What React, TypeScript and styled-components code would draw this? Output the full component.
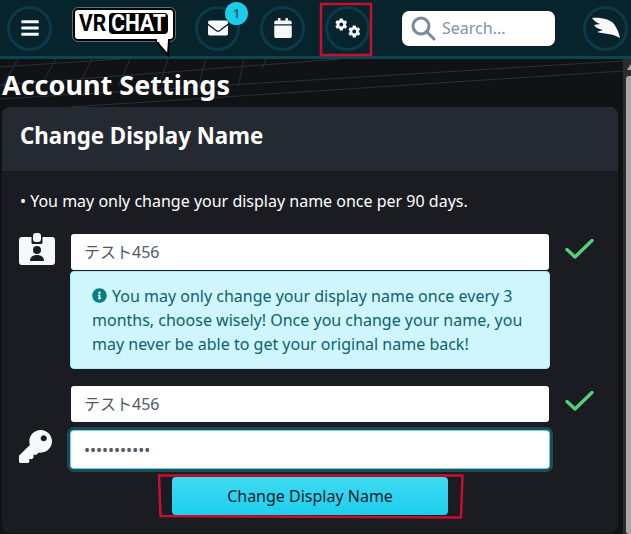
import React from "react";
import styled, { createGlobalStyle } from "styled-components";
import { FaBars, FaEnvelope, FaCalendar, FaCog, FaKey, FaInfoCircle } from "react-icons/fa";

const Global = createGlobalStyle`
  html, body { margin: 0; padding: 0; background: #101216; }
  body { font-family: "Noto Sans", "Noto Sans CJK JP", sans-serif; overflow: hidden; }
  * { box-sizing: border-box; }
`;

const Page = styled.div`
  position: relative;
  width: 631px;
  height: 534px;
  overflow: hidden;
  display: flex;
  flex-direction: column;
`;

const Header = styled.header`
  flex: none;
  height: 59px;
  background: #07232c;
  border-bottom: 3px solid #0e4552;
  display: flex;
  align-items: center;
  padding: 0 0 0 7px;
`;

const Circle = styled.div<{ $ml?: number }>`
  position: relative;
  flex: none;
  width: 45px;
  height: 45px;
  margin-left: ${(p) => p.$ml ?? 0}px;
  border-radius: 50%;
  border: 3px solid #0c3a48;
  display: flex;
  align-items: center;
  justify-content: center;
  color: #f7f8fa;
  font-size: 20px;
`;

const Badge = styled.span`
  position: absolute;
  top: -7px;
  right: -11px;
  width: 23px;
  height: 23px;
  border-radius: 50%;
  background: #1ccdeb;
  color: #2f6472;
  font-size: 12px;
  font-weight: 700;
  display: flex;
  align-items: center;
  justify-content: center;
`;

const Gears = styled.div`
  width: 25px;
  height: 20px;
  display: flex;
  justify-content: space-between;
  font-size: 13px;
  svg:first-child { align-self: flex-start; }
  svg:last-child { align-self: flex-end; }
`;

const Logo = styled.div`
  position: relative;
  flex: none;
  width: 102px;
  height: 33px;
  margin: -8px 0 0 21px;
  background: #fff;
  border: 2px solid #000;
  border-radius: 5px;
  outline: 1px solid rgba(255, 255, 255, 0.35);
  display: flex;
  align-items: stretch;
  padding: 3px 5px 5px 4px;
  font-family: "Roboto", "Liberation Sans", sans-serif;
  font-weight: 700;
  font-size: 21px;
  line-height: 21px;
`;

const LogoVR = styled.span`
  flex: none;
  color: #000;
  width: 30px;
  display: inline-block;
  transform: scale(1, 1.16);
  transform-origin: left center;
  white-space: nowrap;
`;

const LogoChat = styled.span`
  flex: 1;
  min-width: 0;
  background: #000;
  color: #fff;
  border-radius: 4px;
  display: flex;
  justify-content: center;
`;

const LogoChatText = styled.span`
  display: inline-block;
  flex: none;
  transform: scale(1, 1.16);
  white-space: nowrap;
`;

const LogoTail = styled.svg`
  position: absolute;
  right: 2px;
  top: 27px;
`;

const SearchBox = styled.div`
  flex: none;
  width: 153px;
  height: 35px;
  margin-left: 32px;
  background: #fff;
  border-radius: 7px;
  display: flex;
  align-items: center;
  padding-left: 9px;
  gap: 6px;
  color: #8192a3;
  font-size: 16px;
`;

const Body = styled.div`
  position: relative;
  flex: 1;
  display: flex;
  min-height: 0;
`;

const Lines = styled.svg`
  position: absolute;
  left: 0;
  top: 0;
`;

const Main = styled.main`
  position: relative;
  flex: 1;
  padding: 0 5px 0 2px;
`;

const Title = styled.h1`
  margin: 0;
  height: 48px;
  padding: 7px 0 0;
  font-size: 27px;
  line-height: 37px;
  font-weight: 700;
  color: #fff;
`;

const Card = styled.section`
  height: 426px;
  border-radius: 8px;
  background: #1a1c21;
  overflow: hidden;
`;

const CardHead = styled.div`
  height: 64px;
  background: #252932;
  padding: 0 18px;
  display: flex;
  align-items: center;
`;

const CardTitle = styled.h2`
  margin: -8px 0 0;
  font-size: 22.3px;
  font-weight: 700;
  color: #fff;
`;

const CardBody = styled.div`
  padding: 19px 0 0;
`;

const Notice = styled.p`
  margin: 0 0 22px 18px;
  font-size: 16px;
  line-height: 22px;
  color: #fff;
`;

const Row = styled.div`
  display: grid;
  grid-template-columns: 69px 478px 1fr;
`;

const IconCell = styled.div`
  color: #f7f8fa;
  padding-left: 17px;
  display: flex;
  align-items: center;
  font-size: 33px;
`;

const BadgeCell = styled(IconCell)`
  align-items: flex-start;
  margin-top: -1px;
`;

const CheckCell = styled.div`
  padding: 3px 0 0 15px;
`;

const Input = styled.div`
  height: 36px;
  background: #fff;
  border-radius: 3px;
  padding: 0 13px 2px;
  display: flex;
  align-items: center;
  color: #4f5a66;
  font-size: 16px;
`;

const Alert = styled.div`
  width: 480px;
  margin: 1px 0 17px -1px;
  height: 98px;
  background: #cff6fd;
  border: 1px solid #a8ecf8;
  border-radius: 4px;
  padding: 12px 21px 0;
  color: #0c6270;
  font-size: 16px;
  line-height: 24px;
`;

const InfoIcon = styled.span`
  color: #0a7d80;
  font-size: 15px;
  margin-right: 5px;
  vertical-align: -1px;
  display: inline-block;
  line-height: 1;
`;

const PasswordInput = styled.div`
  width: 482px;
  height: 41px;
  margin: 7px 0 0 -2px;
  background: #fff;
  border: 2px solid #6bd0e0;
  outline: 3px solid #1d4c59;
  outline-offset: -1px;
  border-radius: 5px;
  padding: 0 13px;
  display: flex;
  align-items: center;
  color: #4f5a66;
  font-size: 16px;
`;

const ButtonRow = styled.div`
  display: flex;
  justify-content: center;
  margin-top: 7px;
`;

const Button = styled.button`
  width: 276px;
  height: 38px;
  border: none;
  border-radius: 4px;
  background: linear-gradient(180deg, #3fd9f1, #1dcfee);
  color: #0c1c28;
  font-family: inherit;
  font-size: 16px;
`;

const ScrollTrack = styled.div`
  position: relative;
  flex: none;
  width: 8px;
  background: #2c2c2c;
  padding: 17px 0 0 3px;
`;

const ScrollThumb = styled.div`
  width: 5px;
  height: 458px;
  background: #a8a8a8;
  border-radius: 3px 0 0 3px;
`;

const ScrollArrow = styled.div`
  position: absolute;
  right: 0;
  top: 5px;
  width: 0;
  height: 0;
  border-left: 4px solid transparent;
  border-bottom: 6px solid #a8a8a8;
`;

const Annotations = styled.svg`
  position: absolute;
  left: 0;
  top: 0;
  pointer-events: none;
`;

const Check = () => (
  <svg width="32" height="24" viewBox="0 0 32 24" fill="none">
    <path d="M3 12.5 L11 20 L28 3.5" stroke="#56d078" strokeWidth="3.4" strokeLinecap="round" strokeLinejoin="round" />
  </svg>
);

const IdBadge = () => (
  <svg width="36" height="33" viewBox="0 0 36 33" fill="#f7f8fa">
    <rect x="0" y="4" width="36" height="28" rx="3" />
    <rect x="12.5" y="3" width="11" height="8" rx="1.5" fill="#1a1c21" />
    <rect x="14" y="0" width="8" height="9" rx="3" />
    <circle cx="18" cy="17" r="4" fill="#1a1c21" />
    <path d="M11 28c0-4 3-6 7-6s7 2 7 6z" fill="#1a1c21" />
  </svg>
);

const Wing = () => (
  <svg width="30" height="22" viewBox="0 0 30 22" fill="#f7f8fa">
    <path d="M1 1 C9 0 19 2 23 7 C26 11 28 16 29 21 C23 17 15 17 6 15 L12 13 C8 12 5 11 3 8 L9 7 C6 6 3 4 1 1 Z" />
  </svg>
);

export default function App() {
  return (
    <Page>
      <Global />
      <Header>
        <Circle>
          <FaBars />
        </Circle>
        <Logo>
          <LogoVR>VR</LogoVR>
          <LogoChat>
            <LogoChatText>CHAT</LogoChatText>
          </LogoChat>
          <LogoTail width="16" height="20" viewBox="0 0 16 20">
            <path d="M1 3 L5 9 L13 18 L14 3" fill="#fff" stroke="#000" strokeWidth="2" />
            <rect x="2" y="1" width="11" height="4" fill="#fff" />
          </LogoTail>
        </Logo>
        <Circle $ml={20}>
          <FaEnvelope />
          <Badge>1</Badge>
        </Circle>
        <Circle $ml={20}>
          <FaCalendar />
        </Circle>
        <Circle $ml={20}>
          <Gears>
            <FaCog />
            <FaCog />
          </Gears>
        </Circle>
        <SearchBox>
          <svg width="25" height="25" viewBox="0 0 25 25" fill="none" stroke="#7a8b9c" strokeWidth="3" strokeLinecap="round">
            <circle cx="10" cy="10" r="8" />
            <path d="M16 16 L23 23" />
          </svg>
          Search...
        </SearchBox>
        <Circle $ml={28}>
          <Wing />
        </Circle>
      </Header>
      <Body>
        <Lines width="623" height="60" viewBox="0 0 623 60" fill="none" stroke="#2a3138" strokeWidth="1">
          <path d="M0 26 L340 0" />
          <path d="M0 40 L623 2" />
          <path d="M70 48 L623 12" />
          <path d="M0 8 L120 0" />
          <path d="M2 28 L18 0" />
          <path d="M40 28 L56 0" />
          <path d="M78 28 L92 0" />
          <path d="M118 28 L130 0" />
          <path d="M158 28 L168 0" />
          <path d="M198 28 L206 0" />
          <path d="M238 28 L244 0" />
          <path d="M262 10 L266 0" />
        </Lines>
        <Main>
          <Title>Account Settings</Title>
          <Card>
            <CardHead>
              <CardTitle>Change Display Name</CardTitle>
            </CardHead>
            <CardBody>
              <Notice>• You may only change your display name once per 90 days.</Notice>
              <Row>
                <BadgeCell>
                  <IdBadge />
                </BadgeCell>
                <Input>テスト456</Input>
                <CheckCell>
                  <Check />
                </CheckCell>
              </Row>
              <Row>
                <div />
                <Alert>
                  <InfoIcon>
                    <FaInfoCircle />
                  </InfoIcon>
                  You may only change your display name once every 3 months, choose wisely! Once you change your name, you may never be able to get your original name back!
                </Alert>
              </Row>
              <Row>
                <div />
                <Input>テスト456</Input>
                <CheckCell>
                  <Check />
                </CheckCell>
              </Row>
              <Row>
                <IconCell>
                  <FaKey />
                </IconCell>
                <PasswordInput>•••••••••••</PasswordInput>
              </Row>
              <ButtonRow>
                <Button>Change Display Name</Button>
              </ButtonRow>
            </CardBody>
          </Card>
        </Main>
        <ScrollTrack>
          <ScrollArrow />
          <ScrollThumb />
        </ScrollTrack>
      </Body>
      <Annotations width="631" height="534" viewBox="0 0 631 534" fill="none" stroke="#c8102e" strokeWidth="2.5">
        <path d="M321 4 H371 V55 H321 Z" />
        <path d="M159 475.5 H462.5 L461 517.5 L160.5 516 Z" />
      </Annotations>
    </Page>
  );
}
